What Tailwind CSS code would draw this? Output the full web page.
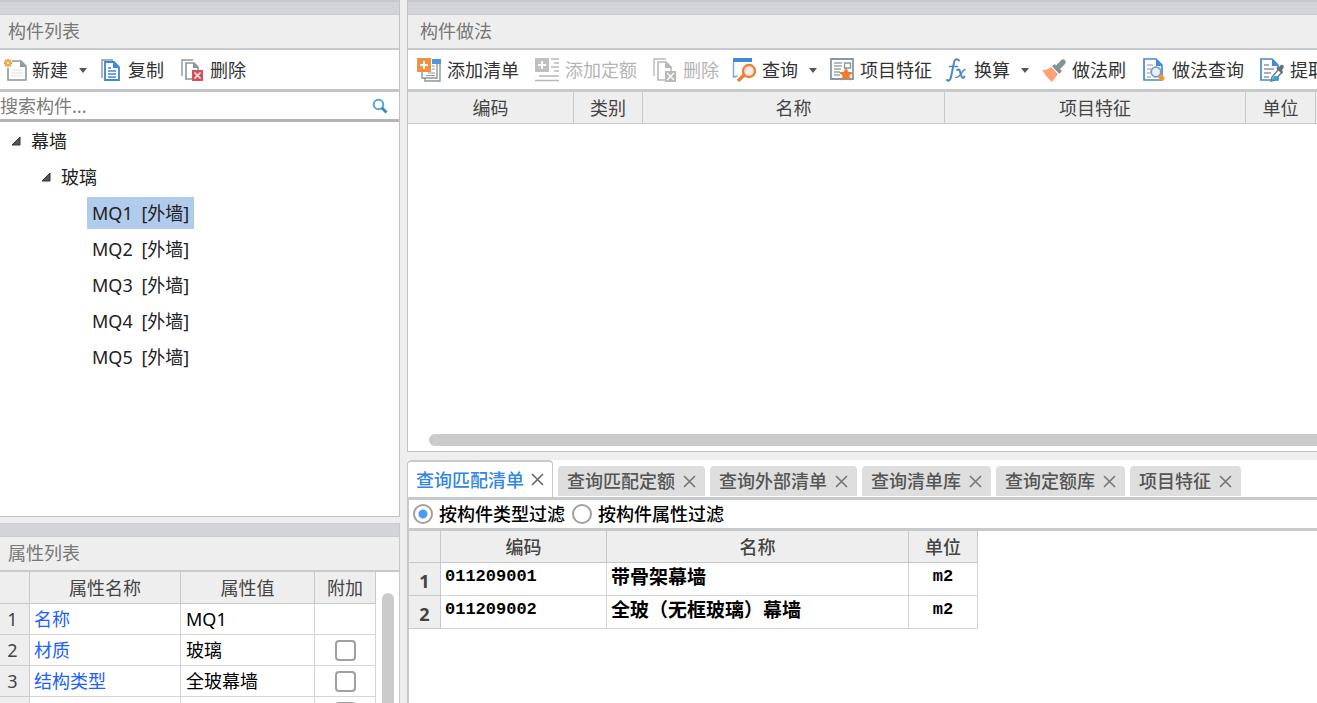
<!DOCTYPE html>
<html lang="zh-CN">
<head>
<meta charset="utf-8">
<meta name="viewport" content="width=device-width, initial-scale=1">
<title>构件做法</title>
<script src="https://cdn.jsdelivr.net/npm/@tailwindcss/browser@4"></script>
</head>
<body class="flex h-screen overflow-hidden bg-[#eeeeee] font-['Noto_Sans','Noto_Sans_CJK_SC',sans-serif] text-[18px] leading-6 text-[#333333]">

<aside class="flex w-[400px] shrink-0 flex-col gap-[6px]">
  <section class="flex min-h-0 flex-1 flex-col border-r border-b border-[#c0c2c4]">
    <div class="h-[15px] shrink-0 border-t-2 border-b border-t-[#c6c8cd] border-b-[#cbccd0] bg-[#d3d4da]"></div>
    <h2 class="h-[35px] shrink-0 border-b-2 border-[#c6cacd] px-2 pt-1 text-[#777777]">构件列表</h2>
    <div class="flex h-[42px] shrink-0 items-center border-b-[3px] border-[#c2c4c6] bg-white">
      <button type="button" class="flex items-center pl-1 pr-2">
        <svg class="mr-1 h-6 w-6" viewBox="0 0 24 24" fill="none"><path d="M8 3h9l5 5v14H4V10" fill="#fff" stroke="#8a979e" stroke-width="1.6"/><path d="M16 3v6h6z" fill="#8a979e"/><path d="M7 12h12M7 15h12M7 18h12" stroke="#e3dfe2" stroke-width="1.2"/><path d="M4 1v8M0 5h8M1 2l6 6M7 2L1 8" stroke="#f5a12e" stroke-width="1.8"/><circle cx="4" cy="5" r="1.3" fill="#fff"/></svg>
        新建
        <svg class="ml-[10px] h-[10px] w-[10px]" viewBox="0 0 10 10"><path d="M1 3h8L5 8z" fill="#555"/></svg>
      </button>
      <button type="button" class="flex items-center pl-1 pr-2">
        <svg class="mr-1 h-6 w-6" viewBox="0 0 24 24" fill="none"><path d="M2 20V2h11" stroke="#8a979e" stroke-width="1.4"/><path d="M5 4h9l5 5v13H5z" fill="#fff" stroke="#3f86d6" stroke-width="1.8"/><path d="M13 4v6h6z" fill="#3f86d6"/><path d="M8 10h3M8 13h8M8 16h8M8 19h8" stroke="#3f86d6" stroke-width="1.4"/></svg>
        复制
      </button>
      <button type="button" class="flex items-center px-2">
        <svg class="mr-[6px] h-6 w-6" viewBox="0 0 24 24" fill="none"><path d="M2 18V2h11" stroke="#8a979e" stroke-width="1.4"/><path d="M12 21H6V5h8l4 4v4" fill="#fff" stroke="#8a979e" stroke-width="1.6"/><path d="M13 4v6h6z" fill="#8a979e"/><path d="M12 12h11v11H12z" fill="#d65258"/><path d="M14.500 14.500l6 6M20.500 14.500l-6 6" stroke="#fff" stroke-width="1.400"/></svg>
        删除
      </button>
    </div>
    <label class="flex h-[30px] shrink-0 items-center border-b-[3px] border-[#b4b4b4] bg-white pr-[11px]">
      <input type="search" aria-label="搜索构件" placeholder="搜索构件..." class="min-w-0 flex-1 outline-none placeholder:text-[#7c7c7c]">
      <svg class="h-4 w-4" viewBox="0 0 16 16" fill="none"><circle cx="6.500" cy="6.500" r="4.800" stroke="#58a5cf" stroke-width="2"/><path d="M10 10l4.500 4.500" stroke="#3287bd" stroke-width="2.800"/></svg>
    </label>
    <ul class="min-h-0 flex-1 bg-white pt-px text-[#222222]">
      <li>
        <div class="flex h-9 items-center pl-[11px]"><svg class="mr-[10px] h-[10px] w-[10px]" viewBox="0 0 10 10"><path d="M9 1v8H1z" fill="#555" stroke="#333"/></svg>幕墙</div>
        <ul>
          <li>
            <div class="flex h-9 items-center pl-[41px]"><svg class="mr-[10px] h-[10px] w-[10px]" viewBox="0 0 10 10"><path d="M9 1v8H1z" fill="#555" stroke="#333"/></svg>玻璃</div>
            <ul class="pl-[87px]">
              <li class="flex h-9 items-center"><span class="bg-[#b1cbec] px-[5px] py-1">MQ1 <span class="ml-1">[外墙]</span></span></li>
              <li class="flex h-9 items-center"><span class="px-[5px] py-1">MQ2 <span class="ml-1">[外墙]</span></span></li>
              <li class="flex h-9 items-center"><span class="px-[5px] py-1">MQ3 <span class="ml-1">[外墙]</span></span></li>
              <li class="flex h-9 items-center"><span class="px-[5px] py-1">MQ4 <span class="ml-1">[外墙]</span></span></li>
              <li class="flex h-9 items-center"><span class="px-[5px] py-1">MQ5 <span class="ml-1">[外墙]</span></span></li>
            </ul>
          </li>
        </ul>
      </li>
    </ul>
  </section>

  <section class="flex h-[180px] shrink-0 flex-col overflow-hidden border-r border-[#c6c8ca]">
    <div class="h-[14px] shrink-0 border-y border-[#cbccd0] bg-[#d3d4da]"></div>
    <h2 class="h-[35px] shrink-0 border-b-2 border-[#c6cacd] px-2 pt-1 text-[#777777]">属性列表</h2>
    <div class="flex min-h-0 flex-1 bg-white">
      <table class="h-max w-[376px] table-fixed border-separate border-spacing-0 text-black">
        <colgroup><col class="w-[30px]"><col class="w-[151px]"><col class="w-[134px]"><col class="w-[61px]"></colgroup>
        <thead class="bg-[#eeeeee] text-[#444444]">
          <tr class="h-8"><th class="border-r border-b border-[#c8c8c8]"></th><th class="border-r border-b border-[#c8c8c8] font-normal">属性名称</th><th class="border-r border-b border-[#c8c8c8] font-normal">属性值</th><th class="border-r border-b border-[#c8c8c8] font-normal">附加</th></tr>
        </thead>
        <tbody>
          <tr class="h-[31px]"><th class="border-r border-b border-[#cccccc] bg-[#eeeeee] pr-1 font-normal text-[#444444]">1</th><td class="border-r border-b border-[#d5d5d5] pl-1 text-[#2060ff]">名称</td><td class="border-r border-b border-[#d5d5d5] pl-[5px]">MQ1</td><td class="border-r border-b border-[#d5d5d5]"></td></tr>
          <tr class="h-[31px]"><th class="border-r border-b border-[#cccccc] bg-[#eeeeee] pr-1 font-normal text-[#444444]">2</th><td class="border-r border-b border-[#d5d5d5] pl-1 text-[#2060ff]">材质</td><td class="border-r border-b border-[#d5d5d5] pl-[5px]">玻璃</td><td class="border-r border-b border-[#d5d5d5]"><input type="checkbox" aria-label="材质附加" class="mx-auto block h-[21px] w-[21px] appearance-none rounded-[4px] border-2 border-[#a0a0a0] bg-white"></td></tr>
          <tr class="h-[31px]"><th class="border-r border-b border-[#cccccc] bg-[#eeeeee] pr-1 font-normal text-[#444444]">3</th><td class="border-r border-b border-[#d5d5d5] pl-1 text-[#2060ff]">结构类型</td><td class="border-r border-b border-[#d5d5d5] pl-[5px]">全玻幕墙</td><td class="border-r border-b border-[#d5d5d5]"><input type="checkbox" aria-label="结构类型附加" class="mx-auto block h-[21px] w-[21px] appearance-none rounded-[4px] border-2 border-[#a0a0a0] bg-white"></td></tr>
          <tr class="h-[31px]"><th class="border-r border-b border-[#cccccc] bg-[#eeeeee]"></th><td class="border-r border-b border-[#d5d5d5]"></td><td class="border-r border-b border-[#d5d5d5]"></td><td class="border-r border-b border-[#d5d5d5]"><input type="checkbox" aria-label="附加" class="mx-auto block h-[21px] w-[21px] appearance-none rounded-[4px] border-2 border-[#a0a0a0] bg-white"></td></tr>
        </tbody>
      </table>
      <div class="ml-[6px] mt-[21px] w-3 rounded-t-full bg-[#cbcbcb]"></div>
    </div>
  </section>
</aside>

<main class="ml-[7px] flex min-w-0 flex-1 flex-col gap-2">
  <section class="flex min-h-0 flex-1 flex-col border-b border-l border-[#c0c2c4]">
    <div class="h-[15px] shrink-0 border-t-2 border-b border-t-[#c6c8cd] border-b-[#cbccd0] bg-[#d3d4da]"></div>
    <h2 class="h-[35px] shrink-0 border-b-2 border-[#c6cacd] px-3 pt-1 text-[#777777]">构件做法</h2>
    <div class="flex h-[42px] shrink-0 items-center overflow-hidden border-b-[3px] border-[#c6cacd] bg-white pl-px whitespace-nowrap">
      <button type="button" class="flex shrink-0 items-center px-2">
        <svg class="mr-[6px] h-6 w-6" viewBox="0 0 24 24" fill="none"><path d="M8 15v8h15V6" fill="#fff" stroke="#8a979e" stroke-width="1.400"/><path d="M5 14v6h15V5" fill="#fff" stroke="#8a979e" stroke-width="1.400"/><path d="M15 1h9v5h-9z" fill="#4b95e6"/><path d="M15 8h3M15 11h3M11 15h7M9 17.500h9" stroke="#8a979e"/><path d="M0 0h14v14H0z" fill="#ee9145"/><path d="M7 3v8M3 7h8" stroke="#fff" stroke-width="1.800"/></svg>
        添加清单
      </button>
      <button type="button" disabled class="flex shrink-0 items-center px-2 text-[#b4b4b4]">
        <svg class="mr-[6px] h-6 w-6" viewBox="0 0 24 24" fill="none"><path d="M0 0h14v14H0z" fill="#c0c0c0"/><path d="M7 3v8M3 7h8" stroke="#fff" stroke-width="1.800"/><path d="M16 1h8M19 5h5M16 9h8M19 13h5M4 18h20M0 22.500h24" stroke="#b8b8b8" stroke-width="1.500"/></svg>
        添加定额
      </button>
      <button type="button" disabled class="flex shrink-0 items-center px-2 text-[#b4b4b4]">
        <svg class="mr-[6px] h-6 w-6" viewBox="0 0 24 24" fill="none"><path d="M1 18V1h12" stroke="#b8b8b8" stroke-width="1.400"/><path d="M12 22H5V4h8l5 5v4" stroke="#b8b8b8" stroke-width="1.600"/><path d="M12 3v7h7z" fill="#b8b8b8"/><path d="M12 13h11v11H12z" fill="#b8b8b8"/><path d="M14 15l7 7M21 15l-7 7" stroke="#fff" stroke-width="1.400"/></svg>
        删除
      </button>
      <button type="button" class="flex shrink-0 items-center pl-[5px] pr-1">
        <svg class="mr-[6px] h-6 w-6" viewBox="0 0 24 24" fill="none"><path d="M1.500 4v15l4-1" stroke="#77a8d8" stroke-width="1.400"/><path d="M1 0h19v4H1z" fill="#4388dc"/><path d="M12.500 16.500L6 23" stroke="#f08035" stroke-width="3.500"/><circle cx="17" cy="13" r="6" fill="#fdebe2" stroke="#f08035" stroke-width="2.400"/></svg>
        查询
        <svg class="ml-[10px] h-[10px] w-[10px]" viewBox="0 0 10 10"><path d="M1 3h8L5 8z" fill="#555"/></svg>
      </button>
      <button type="button" class="flex shrink-0 items-center px-2">
        <svg class="mr-[6px] h-6 w-6" viewBox="0 0 24 24" fill="none"><path d="M1 1h22v20H1z" fill="#fff" stroke="#8a979e" stroke-width="1.800"/><path d="M4 5h8M4 8h8M4 11h7M4 14h6M4 17h6" stroke="#9aa5aa" stroke-width="1.300"/><path d="M14.500 5h6v5h-6z" stroke="#8a979e" stroke-width="1.400"/><path d="M16 9l2.100 4.700 5.200.6-3.900 3.400 1.100 5-4.500-2.500-4.500 2.500 1.100-5-3.900-3.400 5.200-.6z" fill="#ee7c30"/></svg>
        项目特征
      </button>
      <button type="button" class="flex shrink-0 items-center px-1">
        <svg class="mr-[6px] h-6 w-6" viewBox="0 0 24 24" fill="none" stroke="#4b87cc" stroke-linecap="round"><path d="M15 2.500c-2-2.500-4.500-1-5 2L7 19c-.6 3-2.500 4.500-4 3" stroke-width="2"/><path d="M5.500 8.500h8" stroke-width="1.500"/><path d="M13 12c3-2 3 2 4 5s2 4 3.500 1.500" stroke-width="2"/><path d="M21 11.500c-3 0-4 8.500-9.500 8" stroke-width="1.400"/></svg>
        换算
        <svg class="ml-[10px] h-[10px] w-[10px]" viewBox="0 0 10 10"><path d="M1 3h8L5 8z" fill="#555"/></svg>
      </button>
      <button type="button" class="flex shrink-0 items-center px-2">
        <svg class="mr-[6px] h-6 w-6" viewBox="0 0 24 24" fill="none"><path d="M0 12q5 1 9-3l7 7-6 8q-6-5-10-12z" fill="#ff9f73"/><path d="M10 8l7 8 3-3-2-2 5-5q2-3-1-4.500-2-1-4 2l-4 4-1-1.500z" fill="#839199"/><path d="M9 8l8 8" stroke="#fff"/></svg>
        做法刷
      </button>
      <button type="button" class="flex shrink-0 items-center px-2">
        <svg class="mr-[6px] h-6 w-6" viewBox="0 0 24 24" fill="none"><path d="M2 1h12l6 6v15H2z" fill="#fff" stroke="#4388dc" stroke-width="1.700"/><path d="M14 1v7h6z" fill="#4388dc"/><path d="M5 7h6M5 11h4M5 15h3M5 19h4" stroke="#8a979e" stroke-width="1.200"/><circle cx="14" cy="14" r="4.800" fill="#e9f0fa" stroke="#7898c5" stroke-width="1.800"/><path d="M19 16l4 4-3 3.500-4-4z" fill="#f39a20"/></svg>
        做法查询
      </button>
      <button type="button" class="flex shrink-0 items-center px-2">
        <svg class="mr-[6px] h-6 w-6" viewBox="0 0 24 24" fill="none"><path d="M1 1h11l6 6v15H1z" fill="#fff" stroke="#4388dc" stroke-width="1.700"/><path d="M12 1v7h6z" fill="#4388dc"/><path d="M4 7h5M4 11h10M4 15h7M4 19h5" stroke="#8a979e" stroke-width="1.400"/><path d="M19 11l-7 8-1 4 4-1 7-8" fill="#fff" stroke="#6b7980" stroke-width="1.400"/><path d="M14 18l-3 5 5-2 2-3z" fill="#25b5d8"/><path d="M16 10l6 6 1-2-1-2q3-3 1-5-2-1-4 2z" fill="#63717a"/></svg>
        提取
      </button>
    </div>
    <div class="flex min-h-0 flex-1 flex-col overflow-hidden bg-white">
      <table class="w-[1008px] shrink-0 table-fixed border-separate border-spacing-0">
        <colgroup><col class="w-[166px]"><col class="w-[69px]"><col class="w-[302px]"><col class="w-[301px]"><col class="w-[70px]"><col class="w-[100px]"></colgroup>
        <thead class="bg-[#eeeeee] text-[#444444]">
          <tr class="h-8"><th class="border-r border-b border-[#c8c8c8] font-normal">编码</th><th class="border-r border-b border-[#c8c8c8] font-normal">类别</th><th class="border-r border-b border-[#c8c8c8] font-normal">名称</th><th class="border-r border-b border-[#c8c8c8] font-normal">项目特征</th><th class="border-r border-b border-[#c8c8c8] font-normal">单位</th><th class="border-r border-b border-[#c8c8c8] font-normal"></th></tr>
        </thead>
      </table>
      <div class="mt-auto mb-[5px] ml-[21px] h-3 shrink-0 rounded-l-full bg-[#cbcbcb]"></div>
    </div>
  </section>

  <section class="flex h-[243px] shrink-0 flex-col bg-white">
    <div class="flex h-10 shrink-0 items-end gap-[5px] border-b-[3px] border-[#c6cacd] whitespace-nowrap" role="tablist">
      <button type="button" role="tab" aria-selected="true" class="flex h-[37px] shrink-0 items-center gap-[7px] rounded-t-[4px] border-x border-t-2 border-[#c6cacd] bg-white px-2 font-medium text-[#2f86e6]">查询匹配清单<svg class="h-[13px] w-[13px]" viewBox="0 0 13 13"><path d="M1 1l11 11M12 1L1 12" stroke="#666" stroke-width="1.600"/></svg></button>
      <button type="button" role="tab" class="mb-px flex h-[30px] shrink-0 items-center gap-2 rounded-t-[4px] bg-[#dedede] px-[9px] font-medium text-[#555555]">查询匹配定额<svg class="h-[13px] w-[13px]" viewBox="0 0 13 13"><path d="M1 1l11 11M12 1L1 12" stroke="#777" stroke-width="1.600"/></svg></button>
      <button type="button" role="tab" class="mb-px flex h-[30px] shrink-0 items-center gap-2 rounded-t-[4px] bg-[#dedede] px-[9px] font-medium text-[#555555]">查询外部清单<svg class="h-[13px] w-[13px]" viewBox="0 0 13 13"><path d="M1 1l11 11M12 1L1 12" stroke="#777" stroke-width="1.600"/></svg></button>
      <button type="button" role="tab" class="mb-px flex h-[30px] shrink-0 items-center gap-2 rounded-t-[4px] bg-[#dedede] px-[9px] font-medium text-[#555555]">查询清单库<svg class="h-[13px] w-[13px]" viewBox="0 0 13 13"><path d="M1 1l11 11M12 1L1 12" stroke="#777" stroke-width="1.600"/></svg></button>
      <button type="button" role="tab" class="mb-px flex h-[30px] shrink-0 items-center gap-2 rounded-t-[4px] bg-[#dedede] px-[9px] font-medium text-[#555555]">查询定额库<svg class="h-[13px] w-[13px]" viewBox="0 0 13 13"><path d="M1 1l11 11M12 1L1 12" stroke="#777" stroke-width="1.600"/></svg></button>
      <button type="button" role="tab" class="mb-px flex h-[30px] shrink-0 items-center gap-2 rounded-t-[4px] bg-[#dedede] px-[9px] font-medium text-[#555555]">项目特征<svg class="h-[13px] w-[13px]" viewBox="0 0 13 13"><path d="M1 1l11 11M12 1L1 12" stroke="#777" stroke-width="1.600"/></svg></button>
    </div>
    <div class="flex min-h-0 flex-1 flex-col border-l-2 border-[#c6cacd]">
      <div class="flex h-[31px] shrink-0 items-center gap-[7px] border-b-[3px] border-[#c6cacd] pl-1 font-medium text-black">
        <label class="flex items-center gap-[6px]"><input type="radio" name="filter" checked class="h-5 w-5 appearance-none rounded-full border-2 border-[#a0a0a0] bg-white checked:bg-[radial-gradient(circle,#4a9bfa_0_4px,#ffffff_5px)]">按构件类型过滤</label>
        <label class="flex items-center gap-[6px]"><input type="radio" name="filter" class="h-5 w-5 appearance-none rounded-full border-2 border-[#a0a0a0] bg-white checked:bg-[radial-gradient(circle,#4a9bfa_0_4px,#ffffff_5px)]">按构件属性过滤</label>
      </div>
      <table class="w-[569px] table-fixed border-separate border-spacing-0 text-black">
        <colgroup><col class="w-[32px]"><col class="w-[166px]"><col class="w-[302px]"><col class="w-[69px]"></colgroup>
        <thead class="bg-[#eeeeee] text-[#444444]">
          <tr class="h-8"><th class="border-r border-b border-[#c8c8c8]"></th><th class="border-r border-b border-[#c8c8c8] font-medium">编码</th><th class="border-r border-b border-[#c8c8c8] font-medium">名称</th><th class="border-r border-b border-[#c8c8c8] font-medium">单位</th></tr>
        </thead>
        <tbody class="font-bold">
          <tr class="h-[33px]"><th class="border-r border-b border-[#c8c8c8] bg-[#eeeeee] pt-1 text-[#444444]">1</th><td class="border-r border-b border-[#d5d5d5] pb-1 pl-1 font-['Liberation_Mono',monospace] text-[17px]">011209001</td><td class="border-r border-b border-[#d5d5d5] pb-1 pl-1 text-[19px]">带骨架幕墙</td><td class="border-r border-b border-[#d5d5d5] pb-1 text-center font-['Liberation_Mono',monospace] text-[17px]">m2</td></tr>
          <tr class="h-[33px]"><th class="border-r border-b border-[#c8c8c8] bg-[#eeeeee] pt-1 text-[#444444]">2</th><td class="border-r border-b border-[#d5d5d5] pb-1 pl-1 font-['Liberation_Mono',monospace] text-[17px]">011209002</td><td class="border-r border-b border-[#d5d5d5] pb-1 pl-1 text-[19px]">全玻（无框玻璃）幕墙</td><td class="border-r border-b border-[#d5d5d5] pb-1 text-center font-['Liberation_Mono',monospace] text-[17px]">m2</td></tr>
        </tbody>
      </table>
    </div>
  </section>
</main>
</body>
</html>
